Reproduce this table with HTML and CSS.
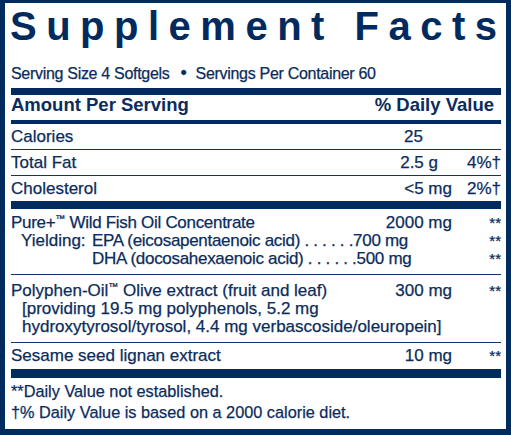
FILE: index.html
```html
<!DOCTYPE html>
<html lang="en">
<head>
<meta charset="utf-8">
<title>Supplement Facts</title>
<link rel="stylesheet" href="styles.css">
</head>
<body>
<div class="label">
  <h1 class="title">Supplement Facts</h1>
  <p class="serving">Serving Size 4 Softgels<span class="bullet">•</span>Servings Per Container 60</p>
  <div class="bar bar-7"></div>
  <div class="head"><span>Amount Per Serving</span><span class="head-dv">% Daily Value</span></div>
  <div class="bar bar-4"></div>

  <div class="row row-cal">
    <span class="name">Calories</span><span class="amt amt-cal">25</span><span class="dv"></span>
  </div>
  <div class="row row-fat">
    <span class="name">Total Fat</span><span class="amt amt-fat">2.5 g</span><span class="dv">4%†</span>
  </div>
  <div class="row row-chol">
    <span class="name">Cholesterol</span><span class="amt">&lt;5 mg</span><span class="dv">2%†</span>
  </div>
  <div class="bar bar-8"></div>

  <div class="group group-fish">
    <div class="line">
      <span class="name name-tight">Pure+<sup class="tm">™</sup> Wild Fish Oil Concentrate</span><span class="amt">2000 mg</span><span class="dv ast">**</span>
    </div>
    <div class="sub">
      <span class="sub-label">Yielding:</span><span class="sub-text">EPA (eicosapentaenoic acid) . . . . . .700 mg</span><span class="dv ast">**</span>
    </div>
    <div class="sub">
      <span class="sub-label"></span><span class="sub-text">DHA (docosahexaenoic acid) . . . . . .500 mg</span><span class="dv ast">**</span>
    </div>
  </div>

  <div class="group group-olive">
    <div class="line">
      <span class="name">Polyphen-Oil<sup class="tm">™</sup> Olive extract (fruit and leaf)</span><span class="amt">300 mg</span><span class="dv ast">**</span>
    </div>
    <p class="detail">[providing 19.5 mg polyphenols, 5.2 mg<br>hydroxytyrosol/tyrosol, 4.4 mg verbascoside/oleuropein]</p>
  </div>

  <div class="group group-sesame">
    <div class="line">
      <span class="name">Sesame seed lignan extract</span><span class="amt">10 mg</span><span class="dv ast">**</span>
    </div>
  </div>
  <div class="bar bar-9"></div>

  <div class="notes">
    <p>**Daily Value not established.</p>
    <p>†% Daily Value is based on a 2000 calorie diet.</p>
  </div>
</div>
</body>
</html>
```

FILE: styles.css
```css
* { box-sizing: border-box; }

html, body {
  margin: 0;
  padding: 0;
  background: #ffffff;
}

.label {
  width: 511px;
  height: 435px;
  border-style: solid;
  border-color: #002b5e;
  border-width: 3px 5px 6px 5px;
  padding: 0 5px 0 6px;
  color: #0b2c5c;
  font-family: "Liberation Sans", Arial, sans-serif;
  font-size: 17px;
  line-height: 18px;
  -webkit-text-stroke: 0.25px #0b2c5c;
  display: flex;
  flex-direction: column;
}

p { margin: 0; }

.title {
  margin: 2px 0 0 -1px;
  font-weight: bold;
  font-size: 40px;
  line-height: 42px;
  letter-spacing: 9.5px;
  white-space: nowrap;
  color: #012b5e;
  -webkit-text-stroke: 0;
}

.serving {
  margin-top: 17px;
  font-size: 16px;
  letter-spacing: -0.3px;
  white-space: nowrap;
}

.bullet {
  font-size: 18px;
  margin: 0 9px 0 11px;
}

.bar {
  background: #002b5e;
  flex: none;
}
.bar-7 { height: 7px; margin-top: 5px; }
.bar-4 { height: 4px; margin-top: 5px; }
.bar-8 { height: 8px; }
.bar-9 { height: 9px; }

.head {
  display: flex;
  justify-content: space-between;
  font-weight: bold;
  font-size: 18.5px;
  line-height: 20px;
  -webkit-text-stroke: 0;
}
.head-dv { padding-right: 7px; }

.row, .line {
  display: grid;
  grid-template-columns: 1fr auto 49px;
  white-space: nowrap;
}

.row {
  padding: 4px 0 3px;
  border-bottom: 1px solid #12346a;
}
.row-chol { border-bottom: none; }

.name-tight { letter-spacing: -0.3px; }

.amt { text-align: right; }
.amt-cal { padding-right: 29px; }
.amt-fat { padding-right: 14px; }

.dv { text-align: right; }
.ast { font-size: 15px; }

.tm {
  font-size: 10px;
  line-height: 0;
  vertical-align: 6px;
}

.group { border-bottom: 1px solid #12346a; }
.group-fish { padding: 5px 0 6px; }
.group-olive { padding: 7px 0 6px; }
.group-sesame { padding: 4px 0 4px; border-bottom: none; }

.sub {
  display: grid;
  grid-template-columns: 71px 1fr 49px;
  padding-left: 10px;
  white-space: nowrap;
}
.sub-text { letter-spacing: -0.3px; }

.detail {
  padding-left: 11px;
  white-space: nowrap;
}

.notes {
  margin-top: 3px;
  font-size: 16.3px;
  line-height: 21px;
}
```
